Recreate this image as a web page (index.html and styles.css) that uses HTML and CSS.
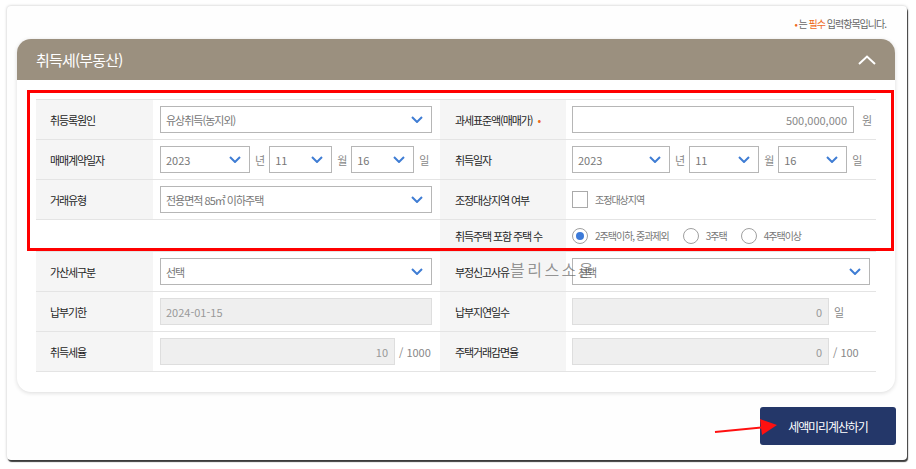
FILE: index.html
```html
<!DOCTYPE html>
<html lang="ko">
<head>
<meta charset="utf-8">
<title>취득세(부동산)</title>
<link rel="stylesheet" href="styles.css">
</head>
<body>
<div class="frame">
  <p class="note"><span class="req">•</span> 는 <span class="req">필수</span> 입력항목입니다.</p>
  <section class="card">
    <header class="card-head">
      <h2 class="title">취득세(부동산)</h2>
      <svg class="toggle" viewBox="0 0 18 10"><polyline points="1,9 9,1.5 17,9"/></svg>
    </header>
    <div class="card-body">
      <div class="grid">
        <div class="lab">취등록원인</div>
        <div class="val">
          <div class="sel w272"><span>유상취득(농지외)</span><svg class="chev" viewBox="0 0 12 7"><polyline points="1,1 6,6 11,1"/></svg></div>
        </div>
        <div class="lab lab2">과세표준액(매매가)<span class="req dot">•</span></div>
        <div class="val val2">
          <div class="inp w282"><span class="num">500,000,000</span></div><span class="unit won">원</span>
        </div>

        <div class="lab">매매계약일자</div>
        <div class="val">
          <div class="sel w90"><span class="num">2023</span><svg class="chev" viewBox="0 0 12 7"><polyline points="1,1 6,6 11,1"/></svg></div><span class="unit">년</span>
          <div class="sel w63"><span class="num">11</span><svg class="chev" viewBox="0 0 12 7"><polyline points="1,1 6,6 11,1"/></svg></div><span class="unit">월</span>
          <div class="sel w63"><span class="num">16</span><svg class="chev" viewBox="0 0 12 7"><polyline points="1,1 6,6 11,1"/></svg></div><span class="unit">일</span>
        </div>
        <div class="lab lab2">취득일자</div>
        <div class="val val2">
          <div class="sel w98"><span class="num">2023</span><svg class="chev" viewBox="0 0 12 7"><polyline points="1,1 6,6 11,1"/></svg></div><span class="unit">년</span>
          <div class="sel w70"><span class="num">11</span><svg class="chev" viewBox="0 0 12 7"><polyline points="1,1 6,6 11,1"/></svg></div><span class="unit">월</span>
          <div class="sel w69"><span class="num">16</span><svg class="chev" viewBox="0 0 12 7"><polyline points="1,1 6,6 11,1"/></svg></div><span class="unit">일</span>
        </div>

        <div class="lab">거래유형</div>
        <div class="val">
          <div class="sel w272"><span>전용면적 85㎡ 이하주택</span><svg class="chev" viewBox="0 0 12 7"><polyline points="1,1 6,6 11,1"/></svg></div>
        </div>
        <div class="lab lab2">조정대상지역 여부</div>
        <div class="val val2">
          <span class="check"></span><span class="opt">조정대상지역</span>
        </div>

        <div class="blank short"></div>
        <div class="lab lab2 short">취득주택 포함 주택 수</div>
        <div class="val val2 short radios">
          <span class="radio on"></span><span class="opt">2주택이하, 중과제외</span>
          <span class="radio"></span><span class="opt">3주택</span>
          <span class="radio"></span><span class="opt">4주택이상</span>
        </div>

        <div class="lab">가산세구분</div>
        <div class="val">
          <div class="sel w272"><span>선택</span><svg class="chev" viewBox="0 0 12 7"><polyline points="1,1 6,6 11,1"/></svg></div>
        </div>
        <div class="lab lab2">부정신고사유</div>
        <div class="val val2">
          <div class="sel w298"><span>선택</span><svg class="chev" viewBox="0 0 12 7"><polyline points="1,1 6,6 11,1"/></svg></div>
        </div>

        <div class="lab">납부기한</div>
        <div class="val">
          <div class="inp ro left w272"><span class="num">2024-01-15</span></div>
        </div>
        <div class="lab lab2">납부지연일수</div>
        <div class="val val2">
          <div class="inp ro w257"><span class="num">0</span></div><span class="unit">일</span>
        </div>

        <div class="lab">취득세율</div>
        <div class="val">
          <div class="inp ro w235"><span class="num">10</span></div><span class="unit num tight">/ 1000</span>
        </div>
        <div class="lab lab2">주택거래감면율</div>
        <div class="val val2">
          <div class="inp ro w257"><span class="num">0</span></div><span class="unit num tight">/ 100</span>
        </div>
      </div>
    </div>
  </section>
  <div class="actions">
    <button class="calc" type="button">세액미리계산하기</button>
  </div>
</div>

<div class="mark-box"></div>
<div class="watermark">블 리 스 소 울</div>
<svg class="arrow" viewBox="0 0 72 28"><line x1="5" y1="20" x2="56" y2="15"/><polygon points="50,7 67,13 52,23"/></svg>
</body>
</html>
```

FILE: styles.css
```css
* { box-sizing: border-box; }

html, body {
  margin: 0;
  padding: 0;
  background: #ffffff;
}

body {
  font-family: "Noto Sans CJK KR", "Noto Sans", sans-serif;
  font-size: 11px;
  letter-spacing: -1px;
  color: #333;
  width: 916px;
  height: 469px;
  overflow: hidden;
}

.frame {
  margin: 6px 0 0 7px;
  width: 900px;
  height: 454px;
  background: #fefefe;
  border-radius: 4px;
  box-shadow: 1px 2px 1px rgba(0, 0, 0, 0.75), 0 0 3px rgba(0, 0, 0, 0.25);
  padding: 0 12px 15px 10px;
  display: flex;
  flex-direction: column;
}

.note {
  margin: 0;
  height: 33px;
  padding: 11px 9px 0 0;
  line-height: 14px;
  font-size: 10px;
  color: #666;
  text-align: right;
}

.req { color: #ee6a1f; }
.dot { margin-left: 5px; }

.card {
  background: #fff;
  border-radius: 14px;
  box-shadow: 0 1px 4px rgba(0, 0, 0, 0.14);
  overflow: hidden;
}

.card-head {
  height: 41px;
  background: #9b907f;
  display: flex;
  align-items: center;
  justify-content: space-between;
  padding: 0 19px;
}

.title {
  margin: 0;
  font-size: 15px;
  font-weight: 400;
  letter-spacing: -0.8px;
  color: #fff;
}

.toggle {
  width: 18px;
  height: 10px;
  fill: none;
  stroke: #fff;
  stroke-width: 2;
}

.card-body {
  padding: 19px 19px 20px;
}

.grid {
  display: grid;
  grid-template-columns: 117px 287px 126px 310px;
  grid-template-rows: 40px 40px 40px 32px 40px 40px 40px;
  border-top: 1px solid #e4e4e4;
}

.grid > div {
  border-bottom: 1px solid #e4e4e4;
  display: flex;
  align-items: center;
}

.lab {
  background: #f5f5f5;
  padding-left: 14px;
  color: #262626;
  letter-spacing: -1.1px;
}

.lab2 { padding-left: 15px; }

.val {
  background: #fff;
  padding-left: 7px;
  gap: 5px;
}

.val2 { padding-left: 6px; }

.blank {
  grid-column: span 2;
  background: #fff;
}

.sel, .inp {
  height: 27px;
  border: 1px solid #b6b6b6;
  background: #fff;
  display: flex;
  align-items: center;
  color: #777;
  flex: none;
}

.sel {
  justify-content: space-between;
  padding: 0 8px 0 5px;
}

.inp {
  justify-content: flex-end;
  padding: 0 6px;
  color: #888;
}

.inp.ro {
  background: #efefef;
  border-color: #dedede;
  color: #999;
}

.inp.left { justify-content: flex-start; padding-left: 5px; }

.chev {
  width: 12px;
  height: 7px;
  fill: none;
  stroke: #3f7dd4;
  stroke-width: 2;
  flex: none;
}

.num { letter-spacing: 0; }

.w272 { width: 272px; }
.w282 { width: 282px; }
.w298 { width: 298px; }
.w257 { width: 257px; }
.w235 { width: 235px; }
.w90 { width: 90px; }
.w63 { width: 63px; }
.w98 { width: 98px; }
.w70 { width: 70px; }
.w69 { width: 69px; }

.unit {
  color: #888;
  font-size: 11px;
}

.won { margin-left: 3px; }
.tight { margin-left: -1px; }

.check {
  width: 16px;
  height: 17px;
  border: 1px solid #aaa;
  background: #fff;
  flex: none;
}

.opt {
  font-size: 10px;
  color: #777;
  letter-spacing: -1px;
  margin-left: 2px;
}

.radios { gap: 5px; }

.radio {
  width: 16px;
  height: 16px;
  border: 1px solid #a0a0a0;
  border-radius: 50%;
  display: flex;
  align-items: center;
  justify-content: center;
  flex: none;
  margin-left: 9px;
}

.radio:first-child { margin-left: 0; }

.radio.on::after {
  content: "";
  width: 8px;
  height: 8px;
  border-radius: 50%;
  background: #3c7ad8;
}

.actions {
  margin-top: 15px;
  margin-right: -1px;
  display: flex;
  justify-content: flex-end;
}

.calc {
  width: 136px;
  height: 38px;
  border: none;
  border-radius: 3px;
  background: #243769;
  color: #fff;
  font-family: "Noto Sans CJK KR", "Noto Sans", sans-serif;
  font-size: 12px;
  letter-spacing: -1.1px;
  padding: 0;
}

.mark-box {
  position: absolute;
  left: 27px;
  top: 90px;
  width: 867px;
  height: 161px;
  border: 3px solid #ff0000;
  pointer-events: none;
}

.watermark {
  position: absolute;
  left: 510px;
  top: 259px;
  font-size: 16px;
  line-height: 20px;
  letter-spacing: -1px;
  color: rgba(90, 90, 90, 0.65);
  pointer-events: none;
}

.arrow {
  position: absolute;
  left: 710px;
  top: 412px;
  width: 72px;
  height: 28px;
  overflow: visible;
}

.arrow line {
  stroke: #ff1010;
  stroke-width: 2;
}

.arrow polygon { fill: #ff1010; }
```
